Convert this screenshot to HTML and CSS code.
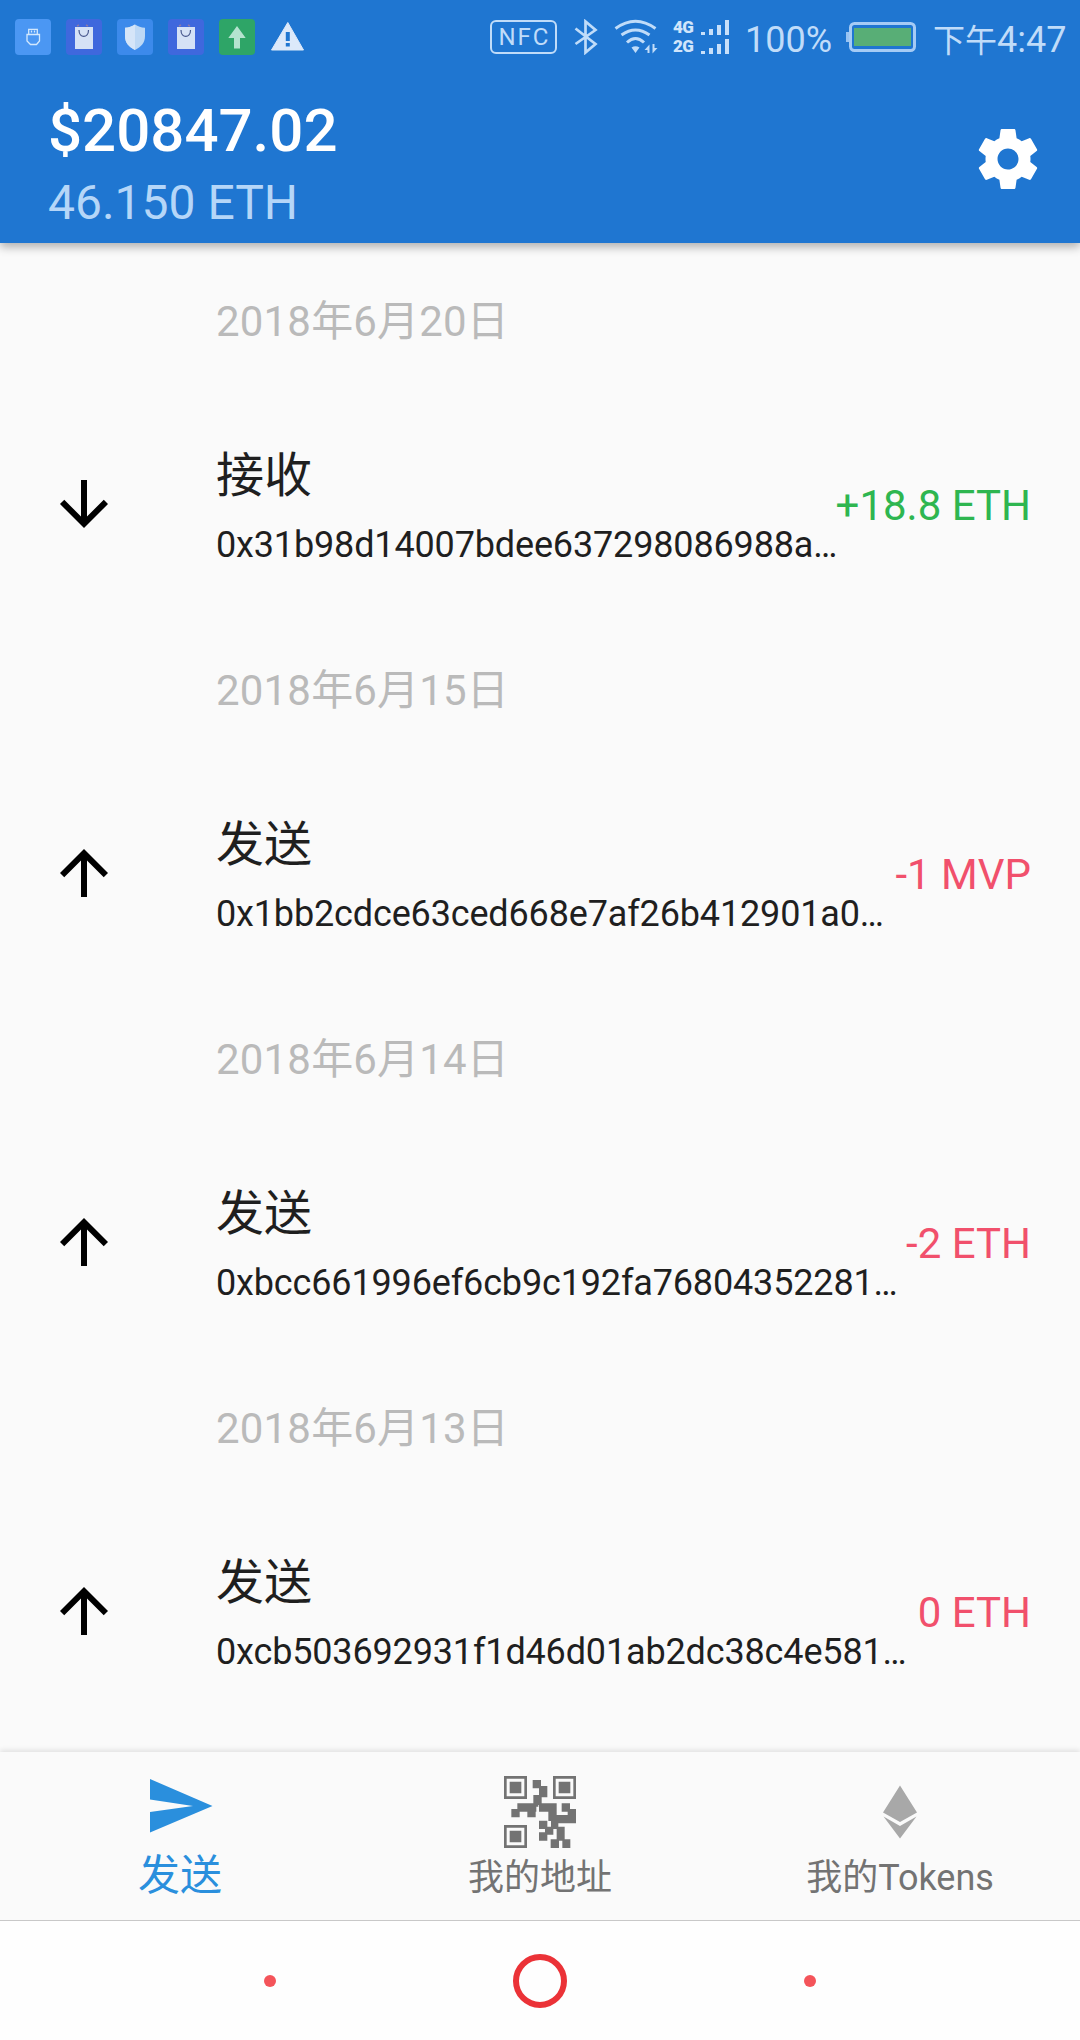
FILE: index.html
```html
<!DOCTYPE html>
<html lang="zh-CN">
<head>
<meta charset="utf-8">
<title>Wallet</title>
<link rel="stylesheet" href="styles.css">
</head>
<body>
<div class="screen">
  <header class="appbar">
    <div class="status">
      <div class="notices">
        <svg class="notice" viewBox="0 0 36 36"><rect width="36" height="36" rx="4" fill="#4b97f3"/><g fill="none" stroke="#d3e8fd" stroke-width="1.3"><path d="M13.7 15v-4.600h8.600V15M12 15.500h12.500v6.500l-3 3.500h-6l-3.500-3.500z"/><path d="M16.500 11.500v2M19.500 11.500v2"/></g></svg>
        <svg class="notice" viewBox="0 0 36 36"><rect width="36" height="36" rx="4" fill="#3f68dd"/><path d="M9 8h18v22H9z" fill="#d5e2f6"/><path d="M13 11c0 8.500 9.500 8.500 9.500 0" fill="none" stroke="#45568c" stroke-width="1.200"/><path d="M11 7l2-1M20 6l2 1" stroke="#8b7ba8" stroke-width="1.500"/></svg>
        <svg class="notice" viewBox="0 0 36 36"><rect width="36" height="36" rx="4" fill="#3c8aeb"/><path d="M18 5.500c3 2 6 3 10 3.300v8.200c0 7-4 11-10 14-6-3-10-7-10-14V8.800c4-.3 7-1.300 10-3.300z" fill="#bdd8f5"/><path d="M18 5.500c-3 2-6 3-10 3.300v8.200c0 7 4 11 10 14z" fill="#d5e5f8"/></svg>
        <svg class="notice" viewBox="0 0 36 36"><rect width="36" height="36" rx="4" fill="#3f68dd"/><path d="M9 8h18v22H9z" fill="#d5e2f6"/><path d="M13 11c0 8.500 9.500 8.500 9.500 0" fill="none" stroke="#45568c" stroke-width="1.200"/><path d="M11 7l2-1M20 6l2 1" stroke="#8b7ba8" stroke-width="1.500"/></svg>
        <svg class="notice" viewBox="0 0 36 36"><rect width="36" height="36" rx="4" fill="#2ea567"/><path d="M18 7l8.700 12H21v10.500h-6V19H9.300z" fill="#b4e3cf"/></svg>
        <svg class="notice" viewBox="0 0 36 36"><path d="M17.800 3.500L33.500 31h-32z" fill="#dce9fa" stroke="#dce9fa" stroke-linejoin="round" stroke-width="1"/><path d="M15.800 13h4v9h-4zM15.800 24h4v3.500h-4z" fill="#1f76d1"/></svg>
      </div>
      <div class="system">
        <span class="nfc">NFC</span>
        <svg class="bluetooth" viewBox="0 0 24 36"><path d="M1.500 9.500l20 15.500-10 8.500V2.500l10 8.500L1.500 25" fill="none" stroke="#c0dcf9" stroke-width="2.700"/></svg>
        <svg class="wifi" viewBox="0 0 45 36"><g fill="none" stroke="#c0dcf9" stroke-width="3"><path d="M1.500 9.500Q21.500-5 41.500 9.500"/><path d="M7.500 16Q21.500 6 35.500 16"/><path d="M13 23.500Q21.500 15.500 30 23.500"/></g><path d="M17.500 28.500q4-2.500 8 0l-4 5.500zM30.500 31l5-5.500V34h-2v-3zM43.500 29l-5 5.500V25h2v4z" fill="#c0dcf9"/></svg>
        <div class="networks">
          <div class="network"><span class="generation">4G</span><svg class="signal" viewBox="0 0 28 15"><path d="M0 12h4v3H0zM8 9h4v6H8zM16 5h4v10h-4zM24 0h4v15h-4z" fill="#c8e0fa"/></svg></div>
          <div class="network"><span class="generation">2G</span><svg class="signal" viewBox="0 0 28 15"><path d="M0 12h4v3H0zM8 9h4v6H8zM16 5h4v10h-4zM24 0h4v15h-4z" fill="#c8e0fa"/></svg></div>
        </div>
        <span class="percent">100%</span>
        <svg class="battery" viewBox="0 0 70 30"><path d="M0 10h4v10H0z" fill="#98c3f2"/><rect x="4.500" y="1.500" width="64" height="27" rx="4" fill="none" stroke="#a5cbf5" stroke-width="3"/><rect x="8" y="6" width="57" height="18" fill="#58ae76"/></svg>
        <span class="clock"><span class="period">下午</span>4:47</span>
      </div>
    </div>
    <div class="toolbar">
      <div class="balance">
        <div class="fiat">$20847.02</div>
        <div class="ether">46.150 ETH</div>
      </div>
      <svg class="settings" viewBox="0 0 24 24"><path fill="#fff" d="M19.430 12.980c.04-.32.07-.64.07-.98s-.03-.66-.07-.98l2.110-1.650c.19-.15.24-.42.12-.64l-2-3.460c-.12-.22-.39-.3-.61-.22l-2.490 1c-.52-.4-1.080-.73-1.690-.98l-.38-2.650C14.460 2.180 14.250 2 14 2h-4c-.25 0-.46.18-.49.42l-.38 2.650c-.61.25-1.170.59-1.690.98l-2.490-1c-.23-.09-.49 0-.61.22l-2 3.460c-.13.22-.07.49.12.64l2.110 1.650c-.04.32-.07.65-.07.98s.03.66.07.98l-2.110 1.650c-.19.15-.24.42-.12.64l2 3.460c.12.22.39.3.61.22l2.490-1c.52.4 1.080.73 1.690.98l.38 2.650c.03.24.24.42.49.42h4c.25 0 .46-.18.49-.42l.38-2.650c.61-.25 1.170-.59 1.690-.98l2.490 1c.23.09.49 0 .61-.22l2-3.460c.12-.22.07-.49-.12-.64l-2.110-1.650zM12 15.500c-1.930 0-3.500-1.570-3.500-3.500s1.570-3.500 3.500-3.500 3.500 1.570 3.500 3.500-1.570 3.500-3.500 3.500z"/></svg>
    </div>
  </header>

  <main class="history">
    <section class="day">
      <h2 class="date">2018年6月20日</h2>
      <div class="transaction">
        <svg class="arrow" viewBox="0 0 24 24"><path d="M20 12l-1.410-1.410L13 16.170V4h-2v12.170l-5.580-5.590L4 12l8 8z"/></svg>
        <div class="details"><div class="kind">接收</div><div class="address">0x31b98d14007bdee637298086988a…</div></div>
        <div class="amount incoming">+18.8 ETH</div>
      </div>
    </section>
    <section class="day">
      <h2 class="date">2018年6月15日</h2>
      <div class="transaction">
        <svg class="arrow" viewBox="0 0 24 24"><path d="M4 12l1.410 1.410L11 7.830V20h2V7.830l5.580 5.590L20 12l-8-8z"/></svg>
        <div class="details"><div class="kind">发送</div><div class="address">0x1bb2cdce63ced668e7af26b412901a0…</div></div>
        <div class="amount">-1 MVP</div>
      </div>
    </section>
    <section class="day">
      <h2 class="date">2018年6月14日</h2>
      <div class="transaction">
        <svg class="arrow" viewBox="0 0 24 24"><path d="M4 12l1.410 1.410L11 7.830V20h2V7.830l5.580 5.590L20 12l-8-8z"/></svg>
        <div class="details"><div class="kind">发送</div><div class="address">0xbcc661996ef6cb9c192fa76804352281…</div></div>
        <div class="amount">-2 ETH</div>
      </div>
    </section>
    <section class="day">
      <h2 class="date">2018年6月13日</h2>
      <div class="transaction">
        <svg class="arrow" viewBox="0 0 24 24"><path d="M4 12l1.410 1.410L11 7.830V20h2V7.830l5.580 5.590L20 12l-8-8z"/></svg>
        <div class="details"><div class="kind">发送</div><div class="address">0xcb503692931f1d46d01ab2dc38c4e581…</div></div>
        <div class="amount">0 ETH</div>
      </div>
    </section>
  </main>

  <nav class="tabs">
    <div class="tab active">
      <svg class="tab-icon" viewBox="0 0 72 72"><path d="M6 9L68.500 36 6 62.500V42L49 36 6 29.500z" fill="#2a8fdd"/></svg>
      <span class="label">发送</span>
    </div>
    <div class="tab">
      <svg class="tab-icon" viewBox="0 0 216 216" fill="#737373"><path fill-rule="evenodd" d="M0 0h69v69H0zM8 8v53h53V8zM147 0h69v69h-69zM155 8v53h53V8zM0 147h69v69H0zM8 155v53h53v-53z"/><path d="M17 17h35v35H17zM164 17h35v35h-35zM17 164h35v35H17z"/><path d="M86 12h25v25H86zM105 30h25v34h-25zM88 57h25v30H88zM40 82h57v25H40zM22 99h25v25H22zM70 82h25v42H70zM95 82h8v10h-8zM105 82h53v25h-53zM133 82h25v53h-25zM173 82h25v25h-25zM191 99h25v43h-25zM150 117h66v25h-66zM141 132h22v27h-22zM105 134h25v25h-25zM123 152h25v24h-25zM105 169h25v25h-25zM158 152h24v42h-24zM140 190h25v26h-25zM175 190h24v26h-24z"/></svg>
      <span class="label">我的地址</span>
    </div>
    <div class="tab">
      <svg class="tab-icon" viewBox="0 0 72 72"><path d="M36 9.500L53 36.500 36 46 19 36.500zM19.500 40.500L36 50l16.500-9.500L36 62.500z" fill="#a8a8a8"/></svg>
      <span class="label">我的Tokens</span>
    </div>
  </nav>

  <footer class="navbar"><i class="dot"></i><i class="home"></i><i class="dot"></i></footer>
</div>
</body>
</html>
```
FILE: styles.css
```css
* { box-sizing: border-box; }
body { margin: 0; background: #fafafa; font-family: Roboto, "Noto Sans CJK SC", sans-serif; color: #1f1f1f; }
.screen { width: 1080px; height: 2040px; display: flex; flex-direction: column; overflow: hidden; }
svg { display: block; flex: none; }

.appbar { height: 243px; flex: none; background: #1f76d1; box-shadow: 0 4px 9px rgba(0, 0, 0, .3); }
.status { height: 75px; display: flex; justify-content: space-between; padding: 0 16px 0 15px; color: #c0dcf9; }
.notices { display: flex; gap: 15px; padding-top: 19px; }
.notice { width: 36px; height: 36px; }
.system { display: flex; }
.nfc { width: 67px; height: 34px; margin: 20px 17px 0 0; border: 2.500px solid #c0dcf9; border-radius: 6px; font-size: 24px; line-height: 31px; letter-spacing: 2px; text-align: center; padding-left: 2px; }
.bluetooth { width: 24px; height: 36px; margin: 19px 16px 0 0; }
.wifi { width: 45px; height: 36px; margin: 19px 14px 0 0; }
.networks { width: 56px; display: flex; flex-direction: column; gap: 4px; margin: 20px 16px 0 0; }
.network { height: 15px; display: flex; align-items: center; justify-content: space-between; }
.generation { font-size: 17px; font-weight: 900; line-height: 15px; letter-spacing: -.7px; color: #d0e5fb; }
.signal { width: 28px; height: 15px; }
.percent { width: 85px; margin-right: 16px; font-size: 36px; line-height: 80px; white-space: nowrap; }
.battery { width: 70px; height: 30px; margin: 22px 17px 0 0; }
.clock { width: 131px; font-size: 36px; line-height: 80px; white-space: nowrap; }
.period { font-size: 32px; }

.toolbar { display: flex; justify-content: space-between; padding: 0 36px 0 48px; }
.balance { padding-top: 19px; white-space: nowrap; }
.fiat { font-size: 60px; font-weight: 500; line-height: 73px; color: #fff; }
.ether { font-size: 48px; line-height: 72px; color: #b5d6f8; }
.settings { width: 72px; height: 72px; margin-top: 48px; }

.history { height: 1509px; flex: none; }
.day { height: 369px; }
.date { height: 158px; margin: 0; padding-left: 216px; font-size: 42px; font-weight: 400; line-height: 158px; letter-spacing: .18px; color: #bababa; }
.transaction { height: 209px; display: flex; align-items: center; padding: 0 49px 0 48px; }
.arrow { width: 72px; height: 72px; margin: 0 96px 4px 0; fill: #000; }
.details { flex: 1; min-width: 0; padding-top: 6px; }
.kind { font-size: 48px; line-height: 72px; }
.address { font-size: 36px; line-height: 66px; letter-spacing: -.15px; white-space: nowrap; }
.amount { font-size: 42px; line-height: 60px; white-space: nowrap; color: #f1506c; }
.incoming { color: #2eb650; }

.tabs { height: 169px; flex: none; display: flex; background: #fafafa; border-bottom: 1px solid #c8c8c8; box-shadow: 0 -2px 5px rgba(0, 0, 0, .1); }
.tab { flex: 1; display: flex; flex-direction: column; align-items: center; padding-top: 24px; color: #737373; }
.tab-icon { width: 72px; height: 72px; }
.label { font-size: 36px; line-height: 60px; white-space: nowrap; }
.active { color: #2a8fdd; padding-top: 18px; }
.active .label { font-size: 42px; line-height: 68px; }

.navbar { flex: 1; display: flex; justify-content: center; align-items: center; gap: 237px; background: #fefefe; }
.dot { width: 12px; height: 12px; border-radius: 50%; background: #f4545a; }
.home { width: 54px; height: 54px; border: 6px solid #eb3237; border-radius: 50%; }
```
